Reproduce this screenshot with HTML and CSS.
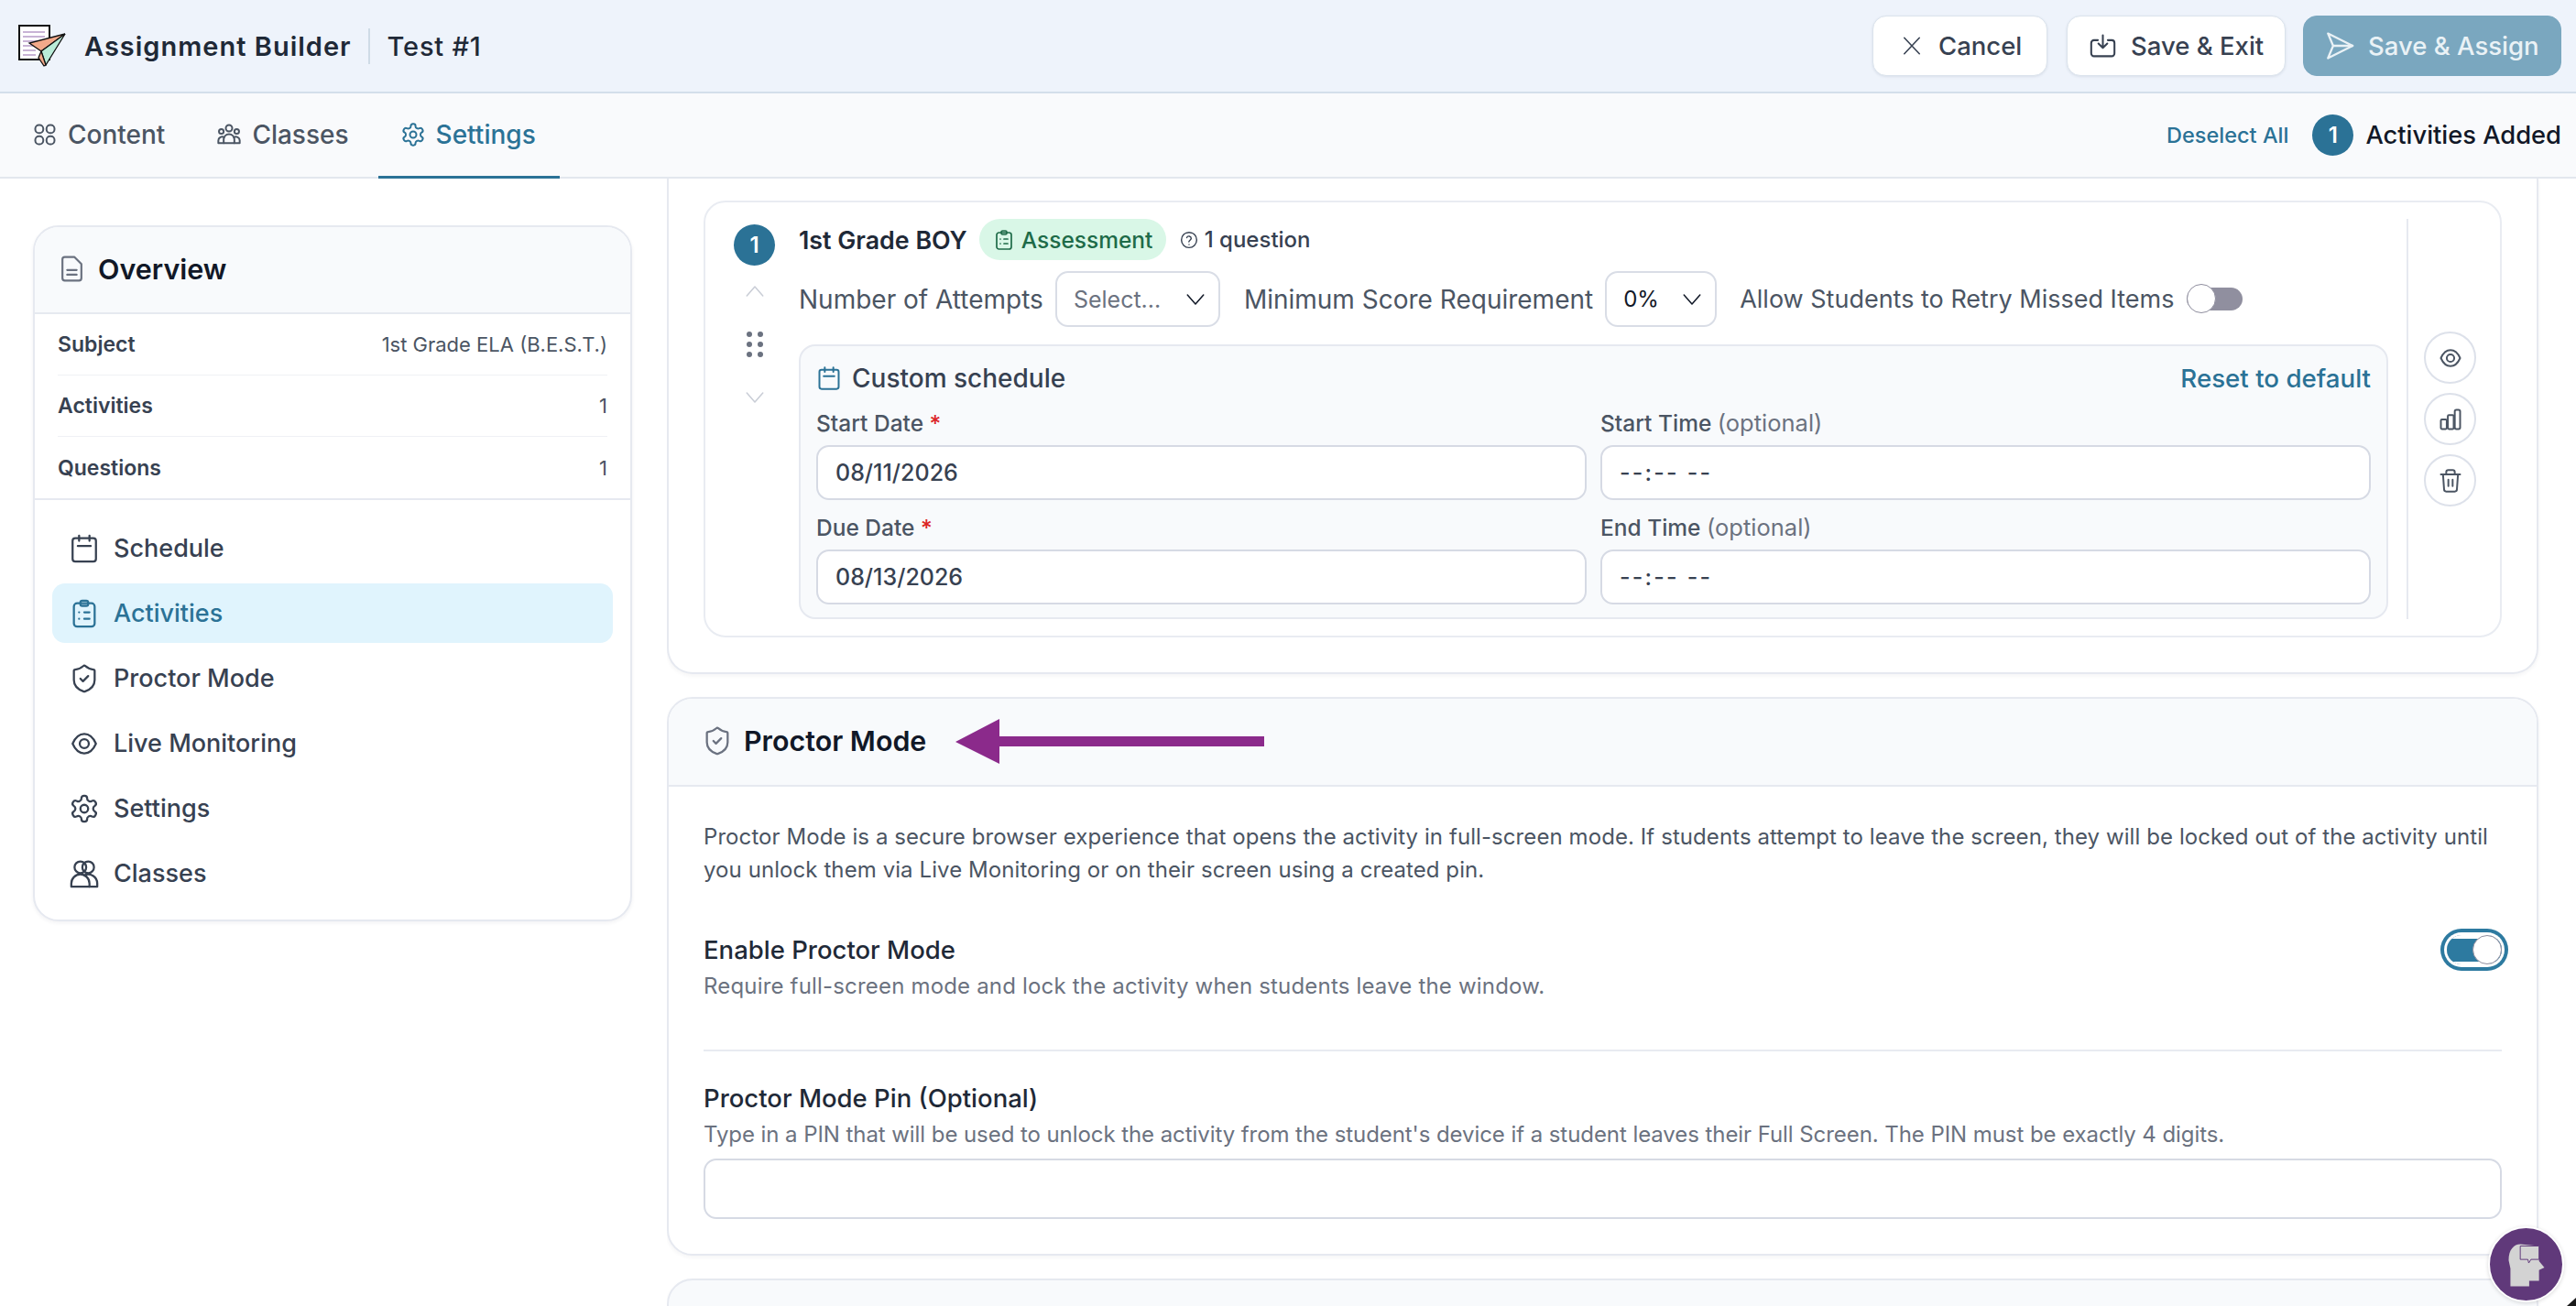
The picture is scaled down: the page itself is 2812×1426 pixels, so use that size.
FILE: index.html
```html
<!DOCTYPE html>
<html lang="en">
<head>
<meta charset="utf-8">
<title>Assignment Builder</title>
<link rel="stylesheet" href="styles.css">
</head>
<body>
<svg class="sprite" aria-hidden="true">
  <symbol id="i-grid" viewBox="0 0 24 24"><rect x="3" y="3" width="7.5" height="7.5" rx="3.5"/><rect x="13.5" y="3" width="7.5" height="7.5" rx="3.5"/><rect x="3" y="13.5" width="7.5" height="7.5" rx="3.5"/><rect x="13.5" y="13.5" width="7.5" height="7.5" rx="3.5"/></symbol>
  <symbol id="i-group" viewBox="0 0 24 24"><circle cx="12" cy="6" r="3"/><circle cx="4.8" cy="9" r="2.2"/><circle cx="19.2" cy="9" r="2.2"/><path d="M7 20v-3.5a5 5 0 0 1 10 0V20z"/><path d="M7 20H2v-2.5A3.5 3.5 0 0 1 7.5 14.600"/><path d="M17 20h5v-2.500A3.500 3.500 0 0 0 16.500 14.600"/></symbol>
  <symbol id="i-gear" viewBox="0 0 24 24"><path d="M12.220 2h-.44a2 2 0 0 0-2 2v.18a2 2 0 0 1-1 1.730l-.43.25a2 2 0 0 1-2 0l-.15-.08a2 2 0 0 0-2.730.73l-.22.38a2 2 0 0 0 .73 2.730l.15.1a2 2 0 0 1 1 1.720v.51a2 2 0 0 1-1 1.740l-.15.09a2 2 0 0 0-.73 2.730l.22.38a2 2 0 0 0 2.730.73l.15-.08a2 2 0 0 1 2 0l.43.25a2 2 0 0 1 1 1.730V20a2 2 0 0 0 2 2h.44a2 2 0 0 0 2-2v-.18a2 2 0 0 1 1-1.730l.43-.25a2 2 0 0 1 2 0l.15.08a2 2 0 0 0 2.730-.73l.22-.39a2 2 0 0 0-.73-2.730l-.15-.08a2 2 0 0 1-1-1.740v-.5a2 2 0 0 1 1-1.740l.15-.09a2 2 0 0 0 .73-2.730l-.22-.38a2 2 0 0 0-2.730-.73l-.15.08a2 2 0 0 1-2 0l-.43-.25a2 2 0 0 1-1-1.730V4a2 2 0 0 0-2-2z"/><circle cx="12" cy="12" r="3"/></symbol>
  <symbol id="i-x" viewBox="0 0 24 24"><path d="M3 2.500l18 19M21 2.500l-18 19"/></symbol>
  <symbol id="i-save" viewBox="0 0 24 24"><path d="M7.500 6.500H4a2.500 2.500 0 0 0-2.500 2.500v9.500A2.500 2.500 0 0 0 4 21h16a2.500 2.500 0 0 0 2.500-2.500V9A2.500 2.500 0 0 0 20 6.500h-3.500"/><path d="M12 2v11.500M8 9.500l4 4 4-4"/></symbol>
  <symbol id="i-send" viewBox="0 0 24 24"><path d="M3 2.500 22 12 3 21.500 7 12z"/><path d="M7 12h15"/></symbol>
  <symbol id="i-file" viewBox="0 0 24 24"><path d="M6 2h8l6 6v12a2 2 0 0 1-2 2H6a2 2 0 0 1-2-2V4a2 2 0 0 1 2-2z"/><path d="M8 13h8M8 17h8"/></symbol>
  <symbol id="i-cal" viewBox="0 0 24 24"><rect x="3" y="4" width="18" height="18" rx="2"/><path d="M8 2v4M16 2v4M7 10h10"/></symbol>
  <symbol id="i-clip" viewBox="0 0 24 24"><rect x="4" y="4" width="16" height="18" rx="2.500"/><rect x="9" y="2" width="6" height="4" rx="1.500"/><path d="M12 11h4M12 16h4M8 11h.01M8 16h.01"/></symbol>
  <symbol id="i-shield" viewBox="0 0 24 24"><path d="M20 13c0 5-3.500 7.500-7.660 8.950a1 1 0 0 1-.67-.01C7.500 20.500 4 18 4 13V6a1 1 0 0 1 1-1c2 0 4.500-1.200 6.240-2.720a1.170 1.170 0 0 1 1.520 0C14.510 3.810 17 5 19 5a1 1 0 0 1 1 1z"/><path d="m9 12 2 2 4-4"/></symbol>
  <symbol id="i-eye" viewBox="0 0 24 24"><path d="M3 12c2.200-5 5.500-7.500 9-7.500s6.800 2.500 9 7.500c-2.200 5-5.500 7.500-9 7.500S5.200 17 3 12z"/><circle cx="12" cy="12" r="3.500"/></symbol>
  <symbol id="i-people" viewBox="0 0 24 24"><circle cx="9" cy="7" r="4.500"/><circle cx="15" cy="7" r="4.500"/><path d="M2 22v-2.500a7 7 0 0 1 7-7 7 7 0 0 1 7 7V22z"/><path d="M12 13.200a7 7 0 0 1 10 6.300V22h-6"/></symbol>
  <symbol id="i-help" viewBox="0 0 24 24"><circle cx="12" cy="12" r="10"/><path d="M9 9a3 3 0 0 1 5.800 1c0 2-3 2.500-3 4.500M12 18h.01"/></symbol>
  <symbol id="i-chev" viewBox="0 0 24 24"><path d="m5 8 7 8 7-8"/></symbol>
  <symbol id="i-chart" viewBox="0 0 24 24"><rect x="3" y="12" width="5.500" height="9" rx="1"/><rect x="9.500" y="8" width="5.500" height="13" rx="1"/><rect x="16" y="3" width="5" height="18" rx="1.500"/></symbol>
  <symbol id="i-trash" viewBox="0 0 24 24"><path d="M3 6h18M8 6V4a2 2 0 0 1 2-2h4a2 2 0 0 1 2 2v2M19 6l-1 14a2 2 0 0 1-2 2H8a2 2 0 0 1-2-2L5 6M10 11v6M14 11v6"/></symbol>
</svg>

<div class="app">
  <header class="topbar">
    <div class="brand">
      <svg class="logo" viewBox="0 0 52 46">
        <rect x="1" y="1" width="33" height="37" fill="#fff" stroke="#111" stroke-width="2"/>
        <path d="M5 8h24M5 13h24M5 18h22M5 23h14M5 28h14M5 33h14" stroke="#b79ac8" stroke-width="1.300"/>
        <path d="M51 10 12 20l13 9z" fill="#f2a98a" stroke="#111" stroke-width="1.300"/>
        <path d="M51 10 25 29l5 15z" fill="#b9ecd8" stroke="#111" stroke-width="1.300"/>
        <path d="m25 29-3 7 6 9 2-1z" fill="#f2a98a" stroke="#111" stroke-width="1.300"/>
      </svg>
      <span class="brand-title">Assignment Builder</span>
      <span class="brand-name">Test #1</span>
    </div>
    <div class="top-actions">
      <button class="btn btn-cancel"><svg class="ico ico-22"><use href="#i-x"/></svg>Cancel</button>
      <button class="btn btn-exit"><svg class="ico ico-29"><use href="#i-save"/></svg>Save &amp; Exit</button>
      <button class="btn btn-assign"><svg class="ico ico-34"><use href="#i-send"/></svg>Save &amp; Assign</button>
    </div>
  </header>

  <nav class="tabs">
    <div class="tab-list">
      <a class="tab"><svg class="ico ico-28"><use href="#i-grid"/></svg>Content</a>
      <a class="tab"><svg class="ico ico-28"><use href="#i-group"/></svg>Classes</a>
      <a class="tab tab-active"><svg class="ico ico-28"><use href="#i-gear"/></svg>Settings</a>
    </div>
    <div class="tab-status">
      <a class="deselect">Deselect All</a>
      <span class="count">1</span>
      <span class="count-label">Activities Added</span>
    </div>
  </nav>

  <div class="content">
    <aside class="sidebar">
      <section class="overview">
        <div class="overview-head"><svg class="ico ico-31 muted"><use href="#i-file"/></svg><span>Overview</span></div>
        <dl class="facts">
          <div class="fact"><dt>Subject</dt><dd>1st Grade ELA (B.E.S.T.)</dd></div>
          <div class="fact"><dt>Activities</dt><dd>1</dd></div>
          <div class="fact"><dt>Questions</dt><dd>1</dd></div>
        </dl>
        <ul class="side-nav">
          <li class="side-item"><svg class="ico ico-34"><use href="#i-cal"/></svg>Schedule</li>
          <li class="side-item side-active"><svg class="ico ico-34"><use href="#i-clip"/></svg>Activities</li>
          <li class="side-item"><svg class="ico ico-34"><use href="#i-shield"/></svg>Proctor Mode</li>
          <li class="side-item"><svg class="ico ico-34"><use href="#i-eye"/></svg>Live Monitoring</li>
          <li class="side-item"><svg class="ico ico-34"><use href="#i-gear"/></svg>Settings</li>
          <li class="side-item"><svg class="ico ico-34"><use href="#i-people"/></svg>Classes</li>
        </ul>
      </section>
    </aside>

    <main class="main">
      <section class="panel panel-activities">
        <article class="activity">
          <div class="gutter">
            <span class="step">1</span>
            <svg class="ico ico-30 faint flip"><use href="#i-chev"/></svg>
            <span class="grip"><i></i><i></i><i></i><i></i><i></i><i></i></span>
            <svg class="ico ico-30 faint"><use href="#i-chev"/></svg>
          </div>
          <div class="activity-body">
            <div class="activity-title">
              <strong>1st Grade BOY</strong>
              <span class="pill"><svg class="ico ico-24"><use href="#i-clip"/></svg>Assessment</span>
              <span class="qcount"><svg class="ico ico-20"><use href="#i-help"/></svg>1 question</span>
            </div>
            <div class="activity-opts">
              <span class="opt-label">Number of Attempts</span>
              <span class="select select-attempts"><span class="placeholder">Select...</span><svg class="ico ico-30"><use href="#i-chev"/></svg></span>
              <span class="opt-label opt-min">Minimum Score Requirement</span>
              <span class="select select-score"><span class="score-value">0%</span><svg class="ico ico-30"><use href="#i-chev"/></svg></span>
              <span class="opt-label opt-retry">Allow Students to Retry Missed Items</span>
              <span class="switch-off"><i></i></span>
            </div>
            <div class="schedule">
              <div class="schedule-head">
                <span class="schedule-title"><svg class="ico ico-28 accent"><use href="#i-cal"/></svg>Custom schedule</span>
                <a class="reset">Reset to default</a>
              </div>
              <div class="schedule-grid">
                <div class="field"><label>Start Date <em>*</em></label><div class="input">08/11/2026</div></div>
                <div class="field"><label>Start Time <small>(optional)</small></label><div class="input input-time">--:-- --</div></div>
                <div class="field"><label>Due Date <em>*</em></label><div class="input">08/13/2026</div></div>
                <div class="field"><label>End Time <small>(optional)</small></label><div class="input input-time">--:-- --</div></div>
              </div>
            </div>
          </div>
          <div class="activity-actions">
            <button class="round"><svg class="ico ico-28"><use href="#i-eye"/></svg></button>
            <button class="round"><svg class="ico ico-28"><use href="#i-chart"/></svg></button>
            <button class="round"><svg class="ico ico-28"><use href="#i-trash"/></svg></button>
          </div>
        </article>
      </section>

      <section class="panel panel-proctor">
        <div class="panel-head">
          <svg class="ico ico-34 muted"><use href="#i-shield"/></svg>
          <h2>Proctor Mode</h2>
          <svg class="arrow" viewBox="0 0 337 49"><path d="M0 25 48 0v19h289v11H48v19z" fill="#8b2a8b"/></svg>
        </div>
        <div class="panel-body">
          <p class="intro">Proctor Mode is a secure browser experience that opens the activity in full-screen mode. If students attempt to leave the screen, they will be locked out of the activity until you unlock them via Live Monitoring or on their screen using a created pin.</p>
          <div class="setting">
            <div>
              <h3>Enable Proctor Mode</h3>
              <p class="hint hint-wide">Require full-screen mode and lock the activity when students leave the window.</p>
            </div>
            <span class="switch-on"><i></i></span>
          </div>
          <hr class="rule">
          <h3>Proctor Mode Pin (Optional)</h3>
          <p class="hint hint-tight">Type in a PIN that will be used to unlock the activity from the student's device if a student leaves their Full Screen. The PIN must be exactly 4 digits.</p>
          <div class="input input-pin"></div>
        </div>
      </section>

      <section class="panel panel-next"></section>
    </main>
  </div>

  <div class="chat">
    <svg viewBox="0 0 81 81"><path d="M21 36c0-12 6-18 13-18l21 2v17l6 7-6 3v12H44v6H23V45z" fill="#d3d3d3"/><path d="M34 20h21v15H46l-2.500 4-1-4H34z" fill="#d3d3d3" stroke="#60397a"/></svg>
  </div>
  <div class="corner"></div>
</div>
</body>
</html>
```
FILE: styles.css
```css
* { box-sizing: border-box; }
html, body { margin: 0; height: 100%; overflow: hidden; }
body { font-family: Inter, "Noto Sans", sans-serif; color: #1f2937; background: #fff; }
.sprite { display: none; }
.ico { flex: none; fill: none; stroke: currentColor; stroke-width: 1.7; stroke-linecap: round; stroke-linejoin: round; }
.ico-20 { width: 20px; height: 20px; }
.ico-22 { width: 22px; height: 22px; }
.ico-24 { width: 24px; height: 24px; }
.ico-28 { width: 28px; height: 28px; }
.ico-29 { width: 29px; height: 29px; }
.ico-30 { width: 30px; height: 30px; stroke-width: 1.2; }
.ico-31 { width: 31px; height: 31px; }
.ico-34 { width: 34px; height: 34px; stroke-width: 1.6; }
.muted { color: #6b7280; }
.faint { color: #c9cdd6; }
.accent { color: #2b7296; }
.flip { transform: rotate(180deg); }

.app { position: relative; display: flex; flex-direction: column; height: 1426px; overflow: hidden; }

.topbar { flex: none; height: 102px; display: flex; align-items: center; justify-content: space-between; padding: 0 16px 0 20px; background: #eef3fb; border-bottom: 2px solid #d3deea; }
.brand { display: flex; align-items: center; }
.logo { width: 52px; height: 46px; margin-right: 20px; }
.brand-title { font-size: 29px; font-weight: 600; letter-spacing: 1px; padding-right: 18px; border-right: 2px solid #cfdbe6; line-height: 39px; }
.brand-name { font-size: 29px; font-weight: 500; letter-spacing: .8px; margin-left: 19px; }
.top-actions { display: flex; }
.btn { display: flex; align-items: center; height: 66px; border-radius: 15px; font: 500 27.5px Inter, sans-serif; color: #374151; background: #fff; border: 1px solid #dbe3ec; box-shadow: 0 1px 3px rgba(30,50,80,.1); padding: 0; }
.btn-cancel { width: 191px; padding-left: 31px; gap: 18px; margin-right: 21px; }
.btn-exit { width: 239px; padding-left: 24px; gap: 16px; margin-right: 19px; }
.btn-assign { width: 282px; padding-left: 22px; gap: 14px; background: #7aa7bf; border-color: #7aa7bf; color: #eaf2f6; box-shadow: none; }

.tabs { flex: none; height: 93px; display: flex; align-items: stretch; justify-content: space-between; padding: 0 16px 0 11px; background: #f9fafc; border-bottom: 2px solid #e3e7ee; }
.tab-list { display: flex; gap: 2px; }
.tab { display: flex; align-items: center; gap: 11px; padding: 0 30px 0 24px; font-size: 28px; font-weight: 500; color: #4b5563; margin-bottom: -2px; border-bottom: 3px solid transparent; }
.tab-active { color: #2b7296; border-bottom-color: #2b7296; padding-right: 26px; }
.tab-status { display: flex; align-items: center; }
.deselect { font-size: 23.5px; font-weight: 500; color: #2b7296; margin-right: 26px; }
.count, .step { display: flex; align-items: center; justify-content: center; width: 45px; height: 45px; border-radius: 50%; background: #2b7296; color: #fff; font-weight: 600; font-size: 24px; }
.count-label { font-size: 27.3px; font-weight: 500; color: #111827; margin-left: 13px; }

.content { flex: 1; display: flex; min-height: 0; }
.sidebar { flex: none; width: 728px; padding: 51px 38px 0 36px; }
.overview { border: 2px solid #e6e9f0; border-radius: 28px; box-shadow: 0 2px 4px rgba(30,40,60,.06); overflow: hidden; background: #fff; height: 760px; }
.overview-head { height: 95px; display: flex; align-items: center; gap: 13px; padding: 0 0 2px 25px; background: #f8fafc; border-bottom: 2px solid #e6e9f0; font-size: 30.5px; font-weight: 600; color: #111827; }
.facts { margin: 0; padding: 0 25px; border-bottom: 2px solid #e6e9f0; }
.fact { height: 67px; display: flex; align-items: center; justify-content: space-between; border-bottom: 1px solid #eff1f5; }
.fact:last-child { border-bottom: 0; }
.fact dt { font-size: 23px; font-weight: 600; color: #374151; }
.fact dd { margin: 0; font-size: 22px; color: #4b5563; }
.side-nav { list-style: none; margin: 0; padding: 20px 19px; display: flex; flex-direction: column; gap: 6px; }
.side-item { height: 65px; display: flex; align-items: center; gap: 15px; padding-left: 18px; border-radius: 14px; font-size: 27px; font-weight: 500; color: #374151; }
.side-active { background: #e0f4fd; color: #2b7296; }

.main { flex: 1; min-width: 0; padding-right: 41px; display: flex; flex-direction: column; gap: 25px; overflow: hidden; }
.panel { flex: none; background: #fff; border: 2px solid #e6e9f0; border-radius: 28px; box-shadow: 0 2px 4px rgba(30,40,60,.05); }
.panel-activities { border-top: 0; border-top-left-radius: 0; border-top-right-radius: 0; padding: 24px 38px 38px; }
.activity { display: flex; border: 2px solid #e9ecf2; border-radius: 24px; padding: 18px 0 18px 31px; }
.gutter { flex: none; width: 45px; display: flex; flex-direction: column; align-items: center; padding-top: 6px; }
.gutter .flip { margin-top: 13px; }
.grip { display: grid; grid-template-columns: 6px 6px; gap: 5px 6px; margin: 29px 0; }
.grip i { width: 6px; height: 6px; border-radius: 50%; background: #6b7280; }
.activity-body { flex: none; width: 1735px; margin-left: 26px; }
.activity-title { height: 45px; display: flex; align-items: center; }
.activity-title strong { font-size: 26.8px; font-weight: 600; color: #1f2937; }
.pill { display: flex; align-items: center; gap: 7px; width: 204px; height: 45px; margin-left: 13px; padding-left: 15px; background: #d9f7e7; color: #1e6b48; border-radius: 23px; font-size: 24.5px; font-weight: 500; white-space: nowrap; }
.qcount { display: flex; align-items: center; gap: 7px; margin-left: 15px; font-size: 24px; font-weight: 500; color: #374151; }
.activity-opts { height: 61px; margin-top: 12px; display: flex; align-items: center; }
.opt-label { font-size: 28px; color: #4b5563; white-space: nowrap; }
.opt-min { margin-left: 26px; }
.opt-retry { margin-left: 25px; font-size: 27px; }
.select { flex: none; height: 61px; display: flex; align-items: center; justify-content: space-between; margin-left: 13px; border: 2px solid #d9dde6; border-radius: 14px; background: #fff; font-size: 25px; color: #111827; padding: 0 10px 0 18px; }
.select-attempts { width: 180px; }
.select-score { width: 122px; }
.placeholder { color: #6b7280; }
.score-value { font-size: 24px; }
.switch-off { position: relative; flex: none; width: 61px; height: 25px; margin-left: 14px; border-radius: 13px; background: #908f9f; }
.switch-off i { position: absolute; left: 0; top: -4px; width: 32px; height: 32px; border-radius: 50%; background: #fff; border: 1.5px solid #8f8e9e; }
.schedule { margin-top: 19px; height: 300px; padding: 17px 17px 0 17px; background: #f8fafc; border: 2px solid #e6e9f0; border-radius: 18px; }
.schedule-head { height: 36px; display: flex; align-items: center; justify-content: space-between; margin-bottom: 13px; }
.schedule-title { display: flex; align-items: center; gap: 11px; font-size: 28px; font-weight: 500; color: #374151; }
.reset { font-size: 27.7px; font-weight: 500; color: #2b7296; }
.schedule-grid { display: grid; grid-template-columns: 841px 841px; gap: 12px 15px; }
.field label { display: block; height: 36px; line-height: 36px; margin-bottom: 6px; font-size: 24.5px; font-weight: 500; color: #4b5563; }
.field em { font-style: normal; color: #dc2626; }
.field small { font-size: 25.5px; font-weight: 400; color: #6b7280; }
.input { height: 60px; display: flex; align-items: center; padding: 0 19px; background: #fff; border: 2px solid #d6dae4; border-radius: 14px; font-size: 25px; font-weight: 500; color: #374151; }
.input-time { letter-spacing: 2.2px; }
.activity-actions { flex: 1; margin-left: 20px; padding-right: 9px; border-left: 2px solid #e6e9f0; display: flex; flex-direction: column; align-items: center; justify-content: center; gap: 10px; }
.round { width: 57px; height: 57px; padding: 0; display: flex; align-items: center; justify-content: center; border: 2px solid #dde1ea; border-radius: 50%; background: #fff; color: #4b5563; }

.panel-head { height: 96px; display: flex; align-items: center; padding: 0 0 2px 36px; background: #f8fafc; border-bottom: 2px solid #e6e9f0; border-radius: 26px 26px 0 0; }
.panel-head h2 { margin: 0 0 0 12px; font-size: 30.4px; font-weight: 600; color: #111827; }
.arrow { width: 337px; height: 49px; margin-left: 32px; }
.panel-body { padding: 37px 38px 38px; }
.intro { margin: 0 0 51px; font-size: 24px; letter-spacing: .08px; line-height: 36px; color: #4b5563; }
.setting { display: flex; justify-content: space-between; align-items: flex-start; }
.panel-body h3 { margin: 0 0 4px; font-size: 27.5px; line-height: 36px; font-weight: 500; color: #1f2937; }
.hint { margin: 0; font-size: 24px; line-height: 36px; color: #6b7280; }
.hint-wide { letter-spacing: .18px; }
.hint-tight { letter-spacing: -.07px; }
.switch-on { position: relative; flex: none; width: 60px; height: 32px; margin-top: 2px; border-radius: 16px; background: linear-gradient(#2d7aa0, #2d7aa0) center / 100% 25px no-repeat; box-shadow: 0 0 0 3px #fff, 0 0 0 7px #2d7aa0; }
.switch-on i { position: absolute; right: 0; top: 0; width: 32px; height: 32px; border-radius: 50%; background: #fff; border: 1.500px solid #8f8e9e; }
.rule { margin: 51px 0 33px; border: 0; border-top: 2px solid #e8ebf1; }
.input-pin { height: 66px; margin-top: 8px; }
.panel-next { height: 120px; background: #f8fafc; }

.chat { position: absolute; left: 2716px; top: 1339px; width: 83px; height: 83px; border-radius: 50%; background: #60397a; border: 2px solid #fff; box-shadow: 0 1px 4px rgba(0,0,0,.15); }
.chat svg { display: block; width: 79px; height: 79px; }
.corner { position: absolute; right: 0; bottom: 0; width: 10px; height: 9px; background: #1a1a1a; clip-path: polygon(100% 0, 100% 100%, 0 100%); }
```
